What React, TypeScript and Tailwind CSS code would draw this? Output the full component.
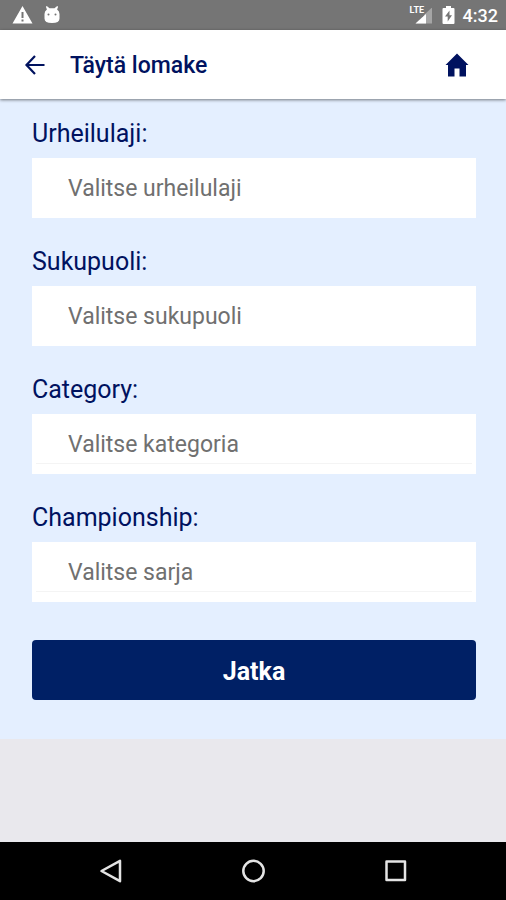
import React, { useState } from 'react';
import clsx from 'clsx';

interface Field {
  id: string;
  label: string;
  placeholder: string;
  underline?: boolean;
}

const FIELDS: Field[] = [
  { id: 'sport', label: 'Urheilulaji:', placeholder: 'Valitse urheilulaji' },
  { id: 'gender', label: 'Sukupuoli:', placeholder: 'Valitse sukupuoli' },
  { id: 'category', label: 'Category:', placeholder: 'Valitse kategoria', underline: true },
  { id: 'championship', label: 'Championship:', placeholder: 'Valitse sarja', underline: true },
];

function StatusBar() {
  return (
    <div className="flex h-[30px] items-center bg-[#757575] pl-3 pr-2 text-white">
      <svg className="h-5 w-[21px]" viewBox="0 0 21 20" fill="currentColor" aria-hidden="true">
        <path fillRule="evenodd" d="M10.5 1 20.5 18.5H.5ZM9.5 7v6h2V7ZM9.5 14.5v2h2v-2Z" />
      </svg>
      <svg className="ml-[11px] h-5 w-4" viewBox="0 0 16 20" fill="currentColor" aria-hidden="true">
        <path
          fillRule="evenodd"
          d="M2.8 1 5.5 3.200h5L13.200 1l.9.8-1 2.700Q15.500 6 15.500 9v4.500Q15.500 18 8 18T.5 13.500V9Q.5 6 2.900 4.500L1.900 1.800ZM4.500 8.500a1 1 0 1 0 0 2 1 1 0 0 0 0-2Zm7 0a1 1 0 1 0 0 2 1 1 0 0 0 0-2Z"
        />
      </svg>
      <div className="ml-auto flex items-center">
        <div className="relative">
          <svg className="h-5 w-6" viewBox="0 0 24 20" aria-hidden="true">
            <path d="M22 3v15.500H5.500L14 10.500V3Z" fill="#a5a5a5" />
            <path d="M13 2v10L5 12V2Z" fill="#757575" />
            <path d="M13 2h2.500L22 2.500 14 10Z" fill="#757575" />
            <path d="M16 9V18.500H5.500Z" fill="#fff" />
          </svg>
          <span className="absolute top-0 left-0 text-[9px] leading-[10px] font-bold">LTE</span>
        </div>
        <svg className="ml-2 h-5 w-[13px]" viewBox="0 0 13 20" fill="currentColor" aria-hidden="true">
          <path
            fillRule="evenodd"
            d="M4 1h5v2h2.500q1 0 1 1v14q0 1-1 1h-10q-1 0-1-1V4q0-1 1-1H4ZM7.500 5.500 3 11.500h2.700V16.500L10 10.300H7.500Z"
          />
        </svg>
        <span className="ml-2 pt-px text-[18px] leading-5 font-medium">4:32</span>
      </div>
    </div>
  );
}

function Header() {
  return (
    <header className="relative flex h-[69px] items-center bg-white px-6 text-[#00125f] shadow-[0_1px_3px_rgba(0,0,0,0.5)]">
      <button type="button" aria-label="Takaisin" className="p-0">
        <svg className="h-[22px] w-[22px]" viewBox="0 0 22 22" fill="none" stroke="currentColor" strokeWidth="2.2" aria-hidden="true">
          <path d="M20.5 11H3M11 2 2.500 11l8.500 9" />
        </svg>
      </button>
      <h1 className="ml-6 pt-0.5 text-[23px] leading-7 font-medium">Täytä lomake</h1>
      <button type="button" aria-label="Etusivu" className="mr-[13px] ml-auto p-0">
        <svg className="h-6 w-6" viewBox="0 0 24 24" fill="currentColor" aria-hidden="true">
          <path d="M12 .5 23.500 12H21v11.500h-6.500v-8h-5v8H3V12H.5Z" />
        </svg>
      </button>
    </header>
  );
}

function SelectField({ id, label, placeholder, underline }: Field) {
  const [value, setValue] = useState('');

  return (
    <div>
      <label htmlFor={id} className="block text-[25px] leading-8 text-[#00125f]">
        {label}
      </label>
      <div className="mt-2 bg-white px-1 py-[10px]">
        <select
          id={id}
          value={value}
          onChange={(e) => setValue(e.target.value)}
          className={clsx(
            'block h-10 w-full appearance-none border-b px-8 pt-1 text-[23px] text-[#707070] outline-none',
            underline ? 'border-[#f4f4f4]' : 'border-white'
          )}
        >
          <option value="">{placeholder}</option>
        </select>
      </div>
    </div>
  );
}

function NavigationBar() {
  const buttonClass = 'flex flex-1 items-center justify-center';
  const iconClass = 'h-6 w-6';

  return (
    <nav className="flex h-[58px] bg-black px-10 text-[#e4e4e4]">
      <button type="button" aria-label="Back" className={buttonClass}>
        <svg className={iconClass} viewBox="0 0 24 24" fill="none" stroke="currentColor" strokeWidth="2.5" strokeLinejoin="round">
          <path d="M21 1.800v20.400L2.500 12Z" />
        </svg>
      </button>
      <button type="button" aria-label="Home" className={buttonClass}>
        <svg className={iconClass} viewBox="0 0 24 24" fill="none" stroke="currentColor" strokeWidth="2.5">
          <circle cx="12.5" cy="12" r="10.2" />
        </svg>
      </button>
      <button type="button" aria-label="Overview" className={buttonClass}>
        <svg className={iconClass} viewBox="0 0 24 24" fill="none" stroke="currentColor" strokeWidth="2.5" strokeLinejoin="round">
          <path d="M3.500 2.500h18.500v18.500H3.500Z" />
        </svg>
      </button>
    </nav>
  );
}

export default function App() {
  return (
    <div className="flex min-h-screen flex-col bg-[#e9e8ed] font-[Roboto,sans-serif]">
      <StatusBar />
      <Header />
      <main className="bg-[#e4efff] pt-[19px] pr-[30px] pb-[39px] pl-8">
        <form onSubmit={(e) => e.preventDefault()}>
          <div className="flex flex-col gap-7">
            {FIELDS.map((field) => (
              <SelectField key={field.id} {...field} />
            ))}
          </div>
          <button
            type="submit"
            className="mt-[38px] h-[60px] w-full rounded bg-[#002065] pt-1 text-[25px] leading-7 font-bold text-white"
          >
            Jatka
          </button>
        </form>
      </main>
      <div className="mt-auto">
        <NavigationBar />
      </div>
    </div>
  );
}
